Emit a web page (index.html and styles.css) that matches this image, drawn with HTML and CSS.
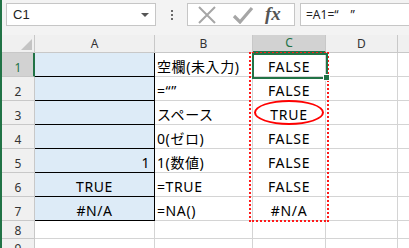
FILE: index.html
```html
<!DOCTYPE html>
<html lang="ja">
<head>
<meta charset="utf-8">
<link rel="stylesheet" href="styles.css">
</head>
<body>
<div class="app">
  <div class="fbar">
    <div class="namebox"><span class="nb-text">C1</span><span class="nb-arrow"></span></div>
    <div class="dots"><i></i><i></i><i></i></div>
    <div class="fxbox">
      <svg class="ico-x" width="20" height="18" viewBox="0 0 20 18"><path d="M2 1 L18 17 M18 1 L2 17" stroke="#a6a6a6" stroke-width="2" fill="none"/></svg>
      <svg class="ico-check" width="22" height="18" viewBox="0 0 22 18"><path d="M2 10 L8 16 L20 2" stroke="#a6a6a6" stroke-width="3.2" fill="none"/></svg>
      <span class="ico-fx">fx</span>
    </div>
    <div class="formula">=A1=“　”</div>
  </div>
  <div class="sheet">
    <div class="grid">
      <div class="corner"><span class="tri"></span></div>
      <div class="ch">A</div>
      <div class="ch">B</div>
      <div class="ch sel">C</div>
      <div class="ch">D</div>
      <div class="ch last"></div>

      <div class="rh sel">1</div>
      <div class="c a"></div>
      <div class="c b">空欄(未入力)</div>
      <div class="c cc">FALSE</div>
      <div class="c"></div>
      <div class="c"></div>

      <div class="rh">2</div>
      <div class="c a"></div>
      <div class="c b">=“”</div>
      <div class="c cc">FALSE</div>
      <div class="c"></div>
      <div class="c"></div>

      <div class="rh">3</div>
      <div class="c a"></div>
      <div class="c b">スペース</div>
      <div class="c cc">TRUE</div>
      <div class="c"></div>
      <div class="c"></div>

      <div class="rh">4</div>
      <div class="c a"></div>
      <div class="c b">0(ゼロ)</div>
      <div class="c cc">FALSE</div>
      <div class="c"></div>
      <div class="c"></div>

      <div class="rh">5</div>
      <div class="c a right">1</div>
      <div class="c b">1(数値)</div>
      <div class="c cc">FALSE</div>
      <div class="c"></div>
      <div class="c"></div>

      <div class="rh">6</div>
      <div class="c a center">TRUE</div>
      <div class="c b">=TRUE</div>
      <div class="c cc">FALSE</div>
      <div class="c"></div>
      <div class="c"></div>

      <div class="rh">7</div>
      <div class="c a center">#N/A</div>
      <div class="c b">=NA()</div>
      <div class="c cc">#N/A</div>
      <div class="c"></div>
      <div class="c"></div>

      <div class="rh short">8</div>
      <div class="c short"></div>
      <div class="c short"></div>
      <div class="c short"></div>
      <div class="c short"></div>
      <div class="c short"></div>

      <div class="rh short">9</div>
      <div class="c short"></div>
      <div class="c short"></div>
      <div class="c short"></div>
      <div class="c short"></div>
      <div class="c short"></div>
    </div>
    <div class="marquee"></div>
    <div class="selbox"><span class="handle"></span></div>
    <div class="ellipse"></div>
  </div>
</div>
</body>
</html>
```

FILE: styles.css
```css
html, body {
  margin: 0;
  padding: 0;
  width: 409px;
  height: 248px;
  overflow: hidden;
  background: #ffffff;
}
.app {
  width: 409px;
  height: 248px;
  box-sizing: border-box;
  border-left: 2px solid #217346;
  overflow: hidden;
  font-family: "Noto Sans", "Noto Sans CJK JP", sans-serif;
}
.fbar {
  height: 35px;
  box-sizing: border-box;
  background: #f3f3f3;
  display: flex;
  align-items: flex-start;
  padding-top: 3px;
  padding-left: 4px;
}
.namebox {
  width: 150px;
  height: 23px;
  box-sizing: border-box;
  background: #fff;
  border: 1px solid #c6c6c6;
  display: flex;
  align-items: center;
  justify-content: space-between;
  padding: 0 6px 0 6px;
}
.nb-text {
  font-family: "Liberation Sans", sans-serif;
  font-size: 13px;
  color: #222;
}
.nb-arrow {
  width: 0;
  height: 0;
  border-left: 4px solid transparent;
  border-right: 4px solid transparent;
  border-top: 4px solid #555;
}
.dots {
  width: 31px;
  height: 23px;
  display: flex;
  flex-direction: column;
  align-items: center;
  justify-content: center;
  gap: 2px;
}
.dots i {
  display: block;
  width: 2px;
  height: 2px;
  background: #6a6a6a;
}
.fxbox {
  width: 108px;
  height: 23px;
  box-sizing: border-box;
  background: #fff;
  border: 1px solid #c6c6c6;
  display: flex;
  align-items: center;
  padding-left: 9px;
}
.ico-x { margin-right: 15px; }
.ico-check { margin-right: 11px; }
.ico-fx {
  font-family: "Liberation Serif", serif;
  font-style: italic;
  font-weight: bold;
  font-size: 19px;
  color: #555;
  line-height: 1;
  margin-top: -2px;
}
.formula {
  flex: 1;
  margin-left: 5px;
  height: 23px;
  box-sizing: border-box;
  background: #fff;
  border: 1px solid #c6c6c6;
  border-right: none;
  padding-left: 5px;
  font-family: "Noto Sans", "Noto Sans CJK JP", sans-serif;
  font-size: 12px;
  line-height: 21px;
  color: #222;
  white-space: nowrap;
}
.sheet {
  position: relative;
}
.grid {
  display: grid;
  grid-template-columns: 33px 120px 98px 73px 72px 20px;
  grid-template-rows: 18px repeat(7, 24px) 18px 18px;
}
.corner {
  background: #f0f0f0;
  border-right: 1px solid #c8c8c8;
  border-bottom: 1px solid #c8c8c8;
  box-sizing: border-box;
  position: relative;
}
.tri {
  position: absolute;
  right: 2px;
  bottom: 2px;
  width: 0;
  height: 0;
  border-left: 11px solid transparent;
  border-bottom: 11px solid #c4c4c4;
}
.ch {
  background: #f0f0f0;
  border-right: 1px solid #c8c8c8;
  border-bottom: 1px solid #c8c8c8;
  box-sizing: border-box;
  text-align: center;
  font-family: "Noto Sans", sans-serif;
  font-size: 12px;
  line-height: 17px;
  color: #333;
}
.ch.sel {
  background: #d2d2d2;
  color: #217346;
  border-bottom: 2px solid #217346;
  line-height: 16px;
}
.rh {
  background: #f0f0f0;
  border-right: 1px solid #c8c8c8;
  border-bottom: 1px solid #c8c8c8;
  box-sizing: border-box;
  text-align: center;
  font-family: "Noto Sans", sans-serif;
  font-size: 12px;
  line-height: 14px;
  padding-top: 8px;
  color: #333;
}
.rh.sel {
  background: #d2d2d2;
  color: #217346;
  border-right: 2px solid #217346;
  padding-left: 1px;
}
.rh.short {
  padding-top: 3px;
}
.c {
  border-right: 1px solid #d4d4d4;
  border-bottom: 1px solid #d4d4d4;
  box-sizing: border-box;
  font-family: "Noto Sans", "Noto Sans CJK JP", sans-serif;
  font-size: 14px;
  line-height: 18px;
  padding-top: 5px;
  color: #000;
  white-space: nowrap;
  overflow: hidden;
}
.c.a {
  background: #ddebf7;
  border-right: 1px solid #000;
  border-bottom: 1px solid #000;
  letter-spacing: 0.6px;
}
.c.b {
  padding-left: 2px;
  font-size: 14px;
  letter-spacing: 0.6px;
}
.c.cc {
  text-align: center;
  letter-spacing: 0.7px;
}
.c.right { text-align: right; padding-right: 4px; }
.c.center { text-align: center; }
.marquee {
  position: absolute;
  left: 247px;
  top: 17px;
  width: 80px;
  height: 170px;
  box-sizing: border-box;
  border: 2px dotted #ff1a1a;
}
.selbox {
  position: absolute;
  left: 250px;
  top: 18px;
  width: 76px;
  height: 26px;
  box-sizing: border-box;
  border: 2px solid #217346;
}
.handle {
  position: absolute;
  right: -4px;
  bottom: -4px;
  width: 5px;
  height: 5px;
  background: #217346;
  border: 1px solid #fff;
}
.ellipse {
  position: absolute;
  left: 252px;
  top: 65px;
  width: 70px;
  height: 25px;
  box-sizing: border-box;
  border: 2px solid #ff0000;
  border-radius: 50%;
}
```
